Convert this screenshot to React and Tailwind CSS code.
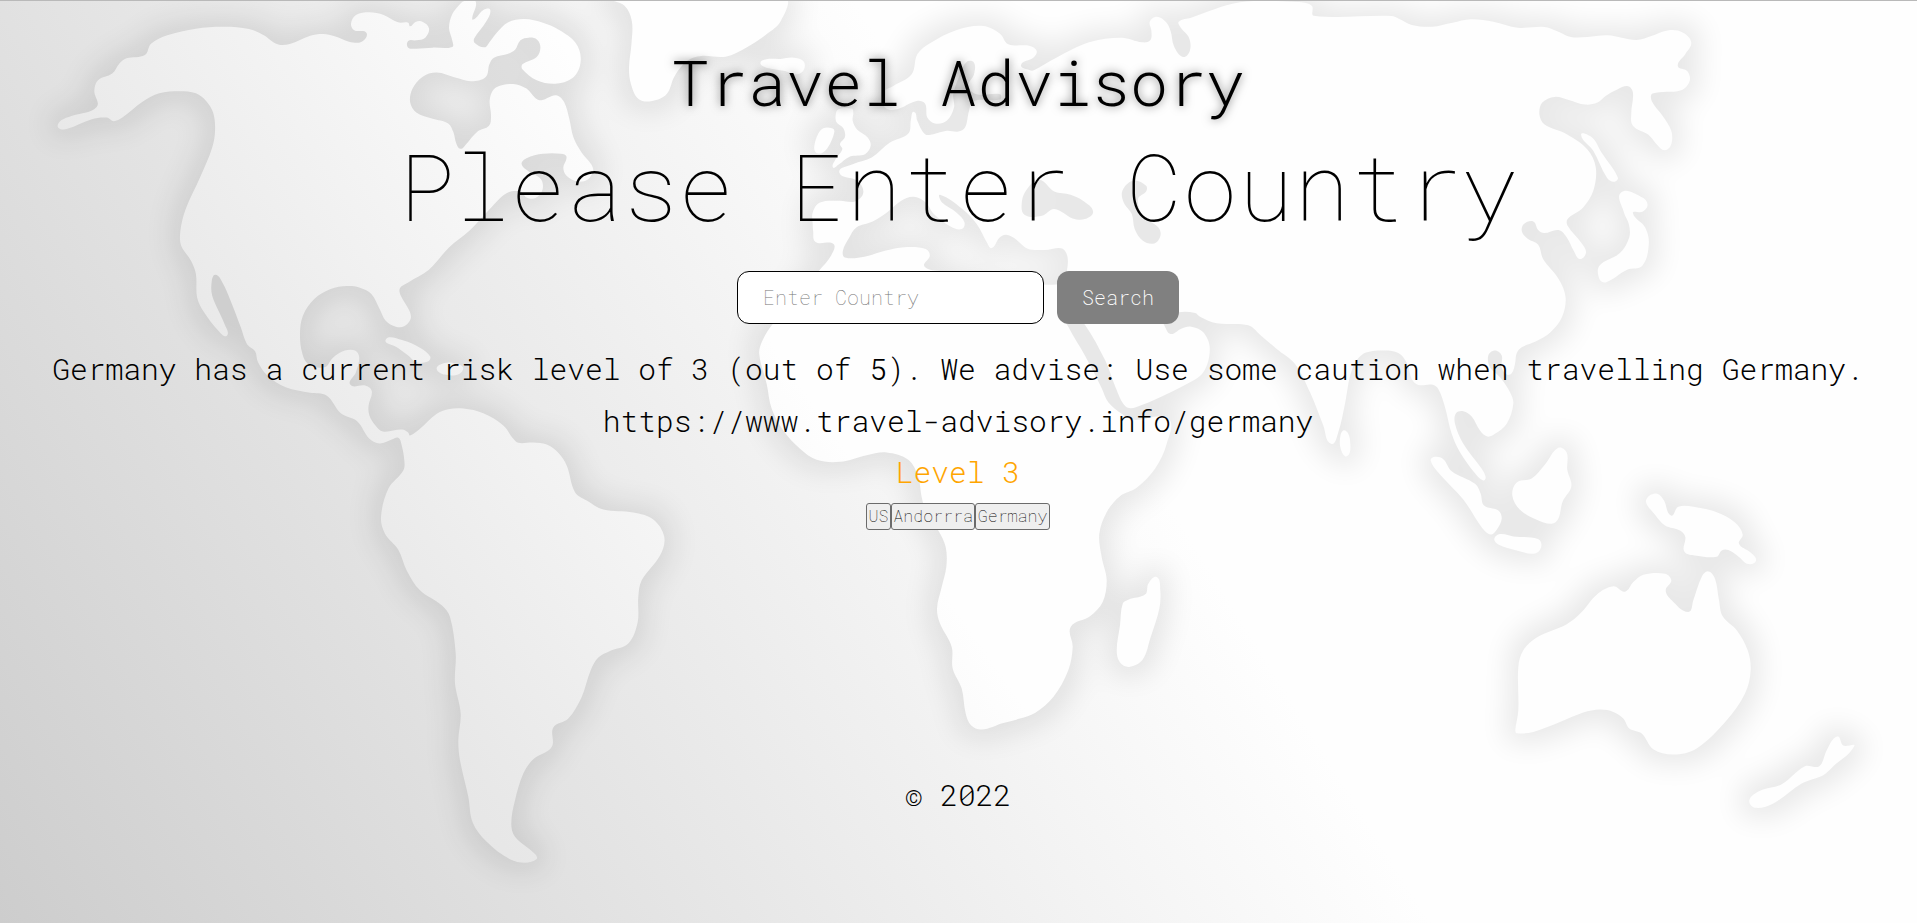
// Each outline is a list of tiles: [originX, originY, scaleX, scaleY, "x y x y ..."].
const WIDE = [1 / 2.45, 1 / 3];
const FINE = [1 / 3, 1 / 3];
const west = (pts) => [0, 0, ...WIDE, pts];
const mid = (pts) => [640, 0, ...WIDE, pts];
const east = (pts) => [1277, 0, ...WIDE, pts];
const fine = (x, y, pts) => [x, y, ...FINE, pts];

const AMERICAS = [
  west(
    "141 375 150 358 175 345 237 318 231 270 240 238 275 218 292 188 310 172 355 162 370 128 410 103 480 83 550 77 610 84 645 102 680 130 710 129 760 104 792 99 820 106 855 122 885 123 898 96 868 88 860 68 872 42 905 34 940 42 975 64 1000 65 1005 76 1018 63 1035 62 1051 82 1042 110 1020 118 1000 120 1000 140 1020 143 1060 140 1108 138 1108 118 1100 80 1108 40 1125 12 1138 0 1165 0 1157 55 1165 52 1185 26 1201 26 1192 60 1162 112 1163 126 1187 139 1200 122 1215 98 1245 64 1285 54 1330 65 1370 87 1410 125 1423 175 1408 225 1365 248 1315 238 1280 205 1280 190 1315 168 1324 140 1316 116 1295 110 1275 118 1262 146 1245 158 1210 170 1199 190 1190 228 1155 241 1115 230 1070 215 1035 228 1010 265 1005 305 1020 335 1060 354 1098 368 1111 395 1118 428 1128 444 1142 430 1170 392 1198 375 1203 345 1200 295 1215 260 1257 249 1290 263 1312 292 1327 298 1362 283 1382 303 1395 355 1405 410 1425 455 1448 490 1453 510 1440 536 1415 542 1388 525 1380 500 1388 468 1375 459 1330 459 1290 472 1278 490 1295 512 1325 535 1329 568 1312 592 1290 590 1275 572 1240 578 1200 625 1150 690 1100 740 1050 808 1000 845 980 862 982 885 1003 930 1006 955 990 977 970 978 945 960 930 925 910 880 880 860 850 856 810 865 770 895 742 945 735 1000 740 1055 755 1090 795 1100 815 1072 845 1050 870 1050 880 1070 872 1115 858 1152 895 1155 911 1172 903 1215 905 1245 920 1275 938 1293 985 1287 1000 1296"
  ),
  fine(
    320,
    380,
    "270 165 300 145 350 100 385 86 430 84 490 98 550 135 580 175 595 187 640 186 680 192 715 217 740 255 765 335 800 360 850 387 940 396 1000 417 1033 470 1020 525 965 600 955 650 953 725 925 790 870 812 835 832 812 870 785 950 745 1015 700 1042 695 1100 640 1137 610 1180 585 1260 574 1330 585 1370 645 1422 650 1437 615 1448 570 1438 500 1385 458 1327 445 1250 420 1140 415 1080 422 1000 405 910 407 820 390 710 365 675 300 630 260 570 235 508 195 460 183 410 205 325 250 270 253 240 244 190 235 172"
  ),
  west(
    "960 1317 930 1329 905 1315 875 1262 835 1238 800 1185 760 1177 700 1160 655 1125 632 1085 625 1052 605 1030 590 980 565 900 545 845 528 822 519 840 520 885 550 970 556 1005 535 990 500 935 483 890 480 820 468 780 444 735 442 690 455 625 490 530 520 440 527 385 522 335 505 300 480 277 440 271 390 277 350 302 300 350 278 361 262 350 225 355 165 384 148 385"
  ),
];

const EURASIA = [
  fine(
    800,
    10,
    "38 640 38 605 60 575 120 570 165 572 190 545 172 510 118 485 160 460 215 440 270 395 325 368 333 325 342 303 352 330 375 370 400 370 440 360 475 362 495 350 507 300 520 270 600 266 600 250 530 250 505 225 522 190 522 155 500 153 480 190 460 250 462 290 440 330 405 338 382 320 375 278 350 270 290 295 255 290 250 245 280 225 335 190 352 130 390 97 470 57 550 45 600 68 625 100 690 105 710 120 700 140 663 162 690 178"
  ),
  mid(
    "965 208 1020 170 1100 124 1180 110 1230 124 1250 118 1253 90 1249 62 1266 47 1288 62 1300 90 1308 135 1330 168 1347 150 1345 110 1325 80 1320 62 1350 50 1470 4"
  ),
  east(
    "50 3 85 14 90 44 280 45 300 54 330 72 380 77 430 65 475 55 530 62 590 80 655 78 685 90 720 108 760 108 810 103 880 117 915 106 960 88 995 95 1015 125 1000 160 982 195 1005 210 1011 240 990 268 920 278 918 300 945 345 966 390 966 430 950 448 930 430 910 402 872 375 868 335 872 275 860 256 835 265 805 285 785 305 755 311 715 297 680 288 650 305 643 340 655 370 710 400 760 445 781 500 775 570 750 620 712 655 712 675 745 725 757 755 742 775 727 750 710 710 690 688 655 697 640 688 628 662 605 670 600 692 615 715 640 732 652 775 690 835 707 890 698 950 670 995 635 1022"
  ),
  fine(
    1400,
    300,
    "365 140 350 158 345 190 335 218 320 222 305 200 305 165 285 150 265 165 270 200 300 230 330 275 340 310 320 370 285 400 262 408 240 390 215 348 190 332 168 338 165 370 190 430 245 505 257 530 250 540 225 518 180 455 155 400 135 320 115 265 95 252 55 253"
  ),
  fine(
    1180,
    300,
    "695 235 682 190 655 157 600 150 545 163 515 210 495 310 475 395 453 430 430 375 390 275 345 190 290 145 240 102 205 74 110 68 60 48"
  ),
  mid("1360 937 1320 935 1280 955 1285 975 1300 1000 1325 985 1350 978 1380 995 1396 1045 1380 1115 1340 1150 1215 1220 1190 1218 1165 1160 1140 1080 1090 972 1060 940 1040 945 1050 980 1090 1065 1130 1160"),
  fine(
    740,
    380,
    "1105 65 1145 100 1180 118 1285 115 1280 190 1245 265 1190 322 1140 347 1100 395 1078 460 1085 530 1100 600 1088 665 1050 708 992 740 998 800 985 870 940 950 885 998 840 1015 790 1028 725 1048 693 1035 677 1000 665 925 638 865 635 800 600 730 591 685 605 620 619 560 617 500 595 450 560 400 545 350 535 290 505 238 440 216 380 224 300 244 230 238 180 205 130 150 95 85 80 10"
  ),
  mid("292 1060 300 1020 325 970 380 900 440 808 468 765 474 730 430 724 424 690"),
];

const MEDITERRANEAN = [
  mid(
    "512 712 497 750 502 770 550 768 600 750 655 739 700 745 710 765 697 797 740 812 850 850 985 851 1030 850 1042 838 1041 750 990 748 950 744 920 715 897 702 880 712 862 742 850 725 825 670 790 625 735 582 740 605 775 635 795 665 788 685 762 678 720 640 700 605 670 588 640 600 605 635 570 662 530 680"
  ),
];
const BLACK_SEA = [mid("978 537 950 562 936 600 942 642 985 645 1015 625 1060 653 1090 655 1110 632 1085 600 1055 582 1015 572")];
const CASPIAN = [mid("1208 540 1240 555 1240 572 1220 595 1232 645 1270 680 1275 705 1260 728 1232 720 1212 685 1205 640 1185 605 1182 570")];

const ISLANDS = [
  // Cuba and Hispaniola
  [west("945 1017 985 1018 1030 1042 1054 1068 1048 1083 1020 1085 1000 1065 975 1042")],
  [west("1070 1105 1085 1089 1110 1087 1134 1100 1125 1120 1090 1122")],
  // Greenland and Iceland
  [west("1490 -8 1530 14 1548 60 1547 130 1541 200 1546 250 1565 295"), mid("30 300 65 280 85 225 115 180 150 165 210 167 260 140 310 100 345 60 355 -8")],
  [mid("295 186 310 175 345 174 375 170 400 180 402 205 385 220 355 210 310 200")],
  // Great Britain and Ireland
  [fine(800, 10, "115 295 155 293 160 305 158 330 172 357 203 380 212 405 195 430 150 437 115 462 99 470 105 448 127 415 120 400 135 378 130 352 110 335 107 312")],
  [fine(800, 10, "70 352 98 353 103 364 85 408 65 427 47 424 43 405 55 368")],
  // Sri Lanka, Madagascar
  [fine(1180, 300, "490 390 505 400 511 430 508 460 495 467 482 445 480 415")],
  [fine(740, 380, "1148 670 1165 658 1216 642 1225 610 1250 590 1261 630 1258 685 1232 770 1208 838 1168 860 1140 847 1130 810 1140 735")],
  // Sakhalin and Japan
  [east("745 402 772 410 795 455 835 530 825 543 808 530 775 450")],
  [east("843 575 895 590 908 612 895 633 872 637 902 680 911 730 895 795 858 807 805 845 790 835 790 795 840 757 863 710 862 670 850 635")],
  // Sumatra, Java, Borneo, New Guinea
  [fine(1400, 400, "92 180 105 169 130 176 155 212 225 250 242 280 252 315 295 330 305 355 290 388 272 402 245 380 190 297 120 222")],
  [fine(1400, 400, "283 416 300 401 340 408 414 416 424 438 405 459 350 450 295 432")],
  [fine(1400, 400, "475 142 500 156 502 208 514 258 488 303 475 355 455 370 410 358 360 328 337 285 350 246 395 234 435 192")],
  [fine(1400, 400, "738 305 748 286 772 280 792 300 813 345 835 319 880 319 950 335 1005 366 1028 402 1017 430 1050 455 1068 480 1045 491 1015 468 985 449 965 450 950 469 890 466 853 453 856 410 840 390 795 375 765 343")],
  // Australia and New Zealand
  [fine(1400, 400, "346 990 355 930 355 800 370 750 410 712 500 672 545 635 590 583 640 558 675 574 700 545 730 523 795 520 814 540 797 570 815 600 865 635 880 600 905 530 925 513 945 535 957 600 968 648 1010 690 1043 750 1052 810 1035 880 980 960 890 1045 820 1063 760 1047 725 1000 688 985 670 955 640 935 600 928 550 937 480 965 400 995 350 999")],
  [fine(1400, 400, "1048 1200 1080 1172 1145 1152 1215 1098 1258 1098 1280 1050 1312 1009 1330 1036 1363 1037 1300 1098 1270 1125 1205 1150 1120 1210 1065 1223")],
];

function toPoints(tiles) {
  return tiles.flatMap(([ox, oy, sx, sy, text]) => {
    const n = text.split(" ").map(Number);
    const out = [];
    for (let i = 0; i < n.length; i += 2) out.push([ox + n[i] * sx, oy + n[i + 1] * sy]);
    return out;
  });
}

// Closed smooth curve through the points; handles stay near a third of their segment.
function smooth(tiles) {
  const p = toPoints(tiles);
  const at = (i) => p[(i + p.length) % p.length];
  const unit = (i) => {
    const dx = at(i + 1)[0] - at(i - 1)[0];
    const dy = at(i + 1)[1] - at(i - 1)[1];
    const l = Math.hypot(dx, dy) || 1;
    return [dx / l, dy / l];
  };
  let d = `M${p[0][0].toFixed(1)} ${p[0][1].toFixed(1)}`;
  for (let i = 0; i < p.length; i++) {
    const a = at(i);
    const b = at(i + 1);
    const h = Math.hypot(b[0] - a[0], b[1] - a[1]) * 0.34;
    const u = unit(i);
    const v = unit(i + 1);
    d += `C${[a[0] + u[0] * h, a[1] + u[1] * h, b[0] - v[0] * h, b[1] - v[1] * h, b[0], b[1]].map((x) => x.toFixed(1)).join(" ")}`;
  }
  return d + "Z";
}

const LAND = [AMERICAS, EURASIA, MEDITERRANEAN, BLACK_SEA, CASPIAN, ...ISLANDS].map(smooth).join("");

function WorldMap() {
  return (
    <svg className="absolute inset-0 h-full w-full" viewBox="0 0 1917 923" preserveAspectRatio="none" aria-hidden="true">
      <defs>
        <linearGradient id="sea" gradientUnits="userSpaceOnUse" x1="0" y1="923" x2="1030" y2="280">
          <stop offset="0" stopColor="#cdcdcd" />
          <stop offset="0.42" stopColor="#e2e2e2" />
          <stop offset="0.85" stopColor="#f7f7f7" />
          <stop offset="1" stopColor="#fefefe" />
        </linearGradient>
        <linearGradient id="ground" gradientUnits="userSpaceOnUse" x1="0" y1="923" x2="792" y2="372">
          <stop offset="0" stopColor="#d6d6d6" />
          <stop offset="0.5" stopColor="#e8e8e8" />
          <stop offset="1" stopColor="#fefefe" />
        </linearGradient>
        <filter id="glow" filterUnits="userSpaceOnUse" x="-60" y="-60" width="2040" height="1050" colorInterpolationFilters="sRGB">
          <feMorphology in="SourceAlpha" operator="dilate" radius="9" />
          <feGaussianBlur stdDeviation="14" />
          <feComponentTransfer>
            <feFuncA type="linear" slope="0.088" />
          </feComponentTransfer>
        </filter>
      </defs>
      <rect width="1917" height="923" fill="url(#sea)" />
      <path d={LAND} fillRule="evenodd" filter="url(#glow)" />
      <path d={LAND} fillRule="evenodd" fill="url(#ground)" />
    </svg>
  );
}

export default function App() {
  return (
    <div className="relative h-[923px] w-full overflow-hidden border-t border-[#b9b9b9] font-['Roboto_Mono',monospace] text-black">
      <WorldMap />
      <main className="relative flex flex-col items-center pr-px text-[29.6px] font-light whitespace-nowrap">
        <h1 className="mt-[30px] text-[63.7px] leading-[100px] [text-shadow:0_0_10px_rgba(0,0,0,0.5)]">Travel Advisory</h1>
        <h2 className="mt-px text-[93.3px] leading-[106px] font-thin">Please Enter Country</h2>
        <form className="mt-[33px] flex gap-[13px] text-xl font-extralight">
          <input
            className="h-[53px] w-[307px] rounded-xl border border-black bg-white px-[25px] pb-0.5 font-thin placeholder:text-[#757575]"
            placeholder="Enter Country"
          />
          <button type="button" className="h-[53px] w-[122px] rounded-xl bg-[#808080] pb-0.5 text-white">
            Search
          </button>
        </form>
        <p className="mt-[19px] leading-[52px]">
          Germany has a current risk level of 3 (out of 5). We advise: Use some caution when travelling Germany.
        </p>
        <p className="leading-[52px]">https://www.travel-advisory.info/germany</p>
        <p className="leading-[50px] text-[#ffa500]">Level 3</p>
        <div className="mt-[6px] flex text-[16.6px] leading-[24px] font-thin">
          {["US", "Andorrra", "Germany"].map((name) => (
            <button key={name} type="button" className="rounded-[3px] border border-[#6b6b6b] bg-[#efefef] px-[1.4px] pb-px">
              {name}
            </button>
          ))}
        </div>
        <footer className="mt-[239px] leading-[52px]">© 2022</footer>
      </main>
    </div>
  );
}
